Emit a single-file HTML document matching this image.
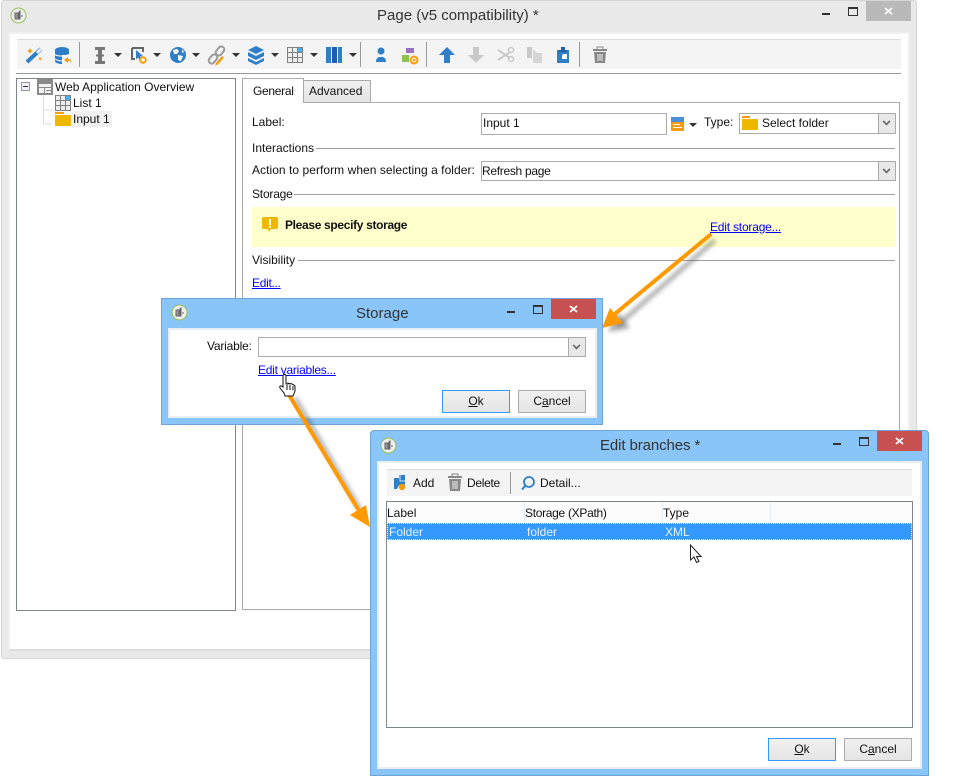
<!DOCTYPE html>
<html><head><meta charset="utf-8"><style>
html,body{margin:0;padding:0;background:#fff;width:953px;height:776px;overflow:hidden}
body{position:relative;font:12px/14px "Liberation Sans",sans-serif;color:#111}
.a{position:absolute;white-space:nowrap}
a,.lnk{color:#00f;text-decoration:underline}
.sel{background:#fff;border:1px solid #ababab;box-sizing:border-box;position:absolute}
.dd{position:absolute;right:0;top:0;bottom:0;width:16px;background:#e8e8e8;border-left:1px solid #ababab}
.dd:after{content:"";position:absolute;left:4px;top:4px;width:5px;height:5px;border-right:2px solid #666;border-bottom:2px solid #666;transform:rotate(45deg) scale(.8)}
.btn{position:absolute;box-sizing:border-box;background:linear-gradient(#f0f0f0,#e5e5e5);border:1px solid #acacac;text-align:center;line-height:20px;height:23px}
.btn.d{border-color:#3399ff}
.rule{position:absolute;height:1px;background:#a0a0a0}
.ti{position:absolute;font-size:15px;line-height:18px;color:#333;white-space:nowrap}
.dn{position:absolute;width:0;height:0;border-left:4px solid transparent;border-right:4px solid transparent;border-top:4px solid #333}
.sep{position:absolute;width:1px;background:#999}
</style></head><body>

<!-- main window -->
<div class="a" style="left:1px;top:0;width:916px;height:659px;background:#e9e9e9;border:1px solid #d6d6d6;box-sizing:border-box;border-radius:3px"></div>
<div class="a" style="left:8px;top:32px;width:902px;height:619px;background:#fff;border:2px solid #f0f0f0;border-bottom-color:#ddd;box-sizing:border-box"></div>
<svg class="a" style="left:10px;top:7px" width="17" height="17" viewBox="0 0 17 17"><circle cx="8.500" cy="8.500" r="7.500" fill="#eee" stroke="#8fc04f"/><path d="M5 6h3v6H5zM9 5l1-1v8H9zM11 9h2" stroke="#666" fill="#999"/></svg>
<div class="ti" style="left:377px;top:7px;">Page (v5 compatibility) *</div>
<div class="a" style="left:822px;top:13px;width:8px;height:2px;background:#333"></div>
<div class="a" style="left:848px;top:7px;width:8px;height:6px;border:1px solid #333;border-top-width:2px"></div>
<div class="a" style="left:866px;top:1px;width:45px;height:20px;background:#b9b9b9"></div>
<svg class="a" style="left:884px;top:7px" width="10" height="9"><path d="M1 1l7 6M8 1L1 7" stroke="#fff" stroke-width="1.800"/></svg>

<!-- toolbar -->
<div class="a" style="left:17px;top:39px;width:884px;height:30px;background:#f4f4f4;border-top:1px solid #ddd;box-sizing:border-box"></div>
<div class="a" style="left:16px;top:73px;width:885px;height:1px;background:#999"></div>
<div class="sep" style="left:79px;top:42px;height:25px"></div>
<div class="sep" style="left:360px;top:42px;height:25px"></div>
<div class="sep" style="left:426px;top:42px;height:25px"></div>
<div class="sep" style="left:579px;top:42px;height:25px"></div>

<svg class="a" style="left:0;top:39px" width="640" height="32" viewBox="0 39 640 32">
 <path d="M27 62L41 49" stroke="#2f7fc8" stroke-width="4"/><path d="M37 53l4-4" stroke="#eee" stroke-width="3"/><path d="M30 48l1 2 2 1-2 1-1 2-1-2-2-1 2-1zM40 57l1 1 1 1-1 .5-1 1-.5-1-1-1 1-.5z" fill="#f39c12"/>
 <ellipse cx="62" cy="50" rx="7" ry="3" fill="#2f7fc8"/><path d="M55 50v11c0 2 4 3 7 3V50zM62 50h7v5h-7z" fill="#2f7fc8"/><path d="M55 54.500c2 2 10 2 14 0M55 59c2 1.500 5 2 8 2" stroke="#fff" fill="none"/><path d="M64 60l4-3v2c3 0 3 2 3 4-1-2-2-2-3-2v2z" fill="#f39c12"/>
 <path d="M95 48.500h10M95 62.500h10" stroke="#777" stroke-width="3"/><path d="M100 48v14" stroke="#777" stroke-width="4"/><path d="M96 55.500h8" stroke="#777" stroke-width="2"/>
 <path d="M132 48h11v4M132 48v11h3" stroke="#666" stroke-width="2" fill="none"/><path d="M136 50l7 6-3 .5 2 3-2 1-2-3-2 2z" fill="#2f7fc8"/><circle cx="143" cy="60" r="2.800" fill="#fff" stroke="#f39c12" stroke-width="2"/>
 <circle cx="178" cy="55" r="8" fill="#2f7fc8"/><path d="M173 50l4-1 2 2-2 3-3 0zM178 55l5 1-2 5-3-1zM182 49l2 3-2 1z" fill="#fff"/>
 <g fill="none" stroke="#999" stroke-width="2"><rect x="-5" y="-3" width="10" height="6" rx="3" transform="translate(213 59) rotate(-50)"/><rect x="-5" y="-3" width="10" height="6" rx="3" transform="translate(220 51) rotate(-50)"/></g><path d="M216 63l6-7 2 1.500-6 7-3 1z" fill="#f39c12"/>
 <path d="M256 46l8 4-8 4-8-4z" fill="#2f7fc8"/><path d="M248 52v4l8 4 8-4v-4l-8 4zM248 58v3l8 4 8-4v-3l-8 4z" fill="#2f7fc8"/>
 <rect x="287" y="47" width="16" height="16" fill="#808080"/><path d="M288 48h4v4h-4zM293 48h4v4h-4zM288 53h4v4h-4zM293 53h4v4h-4zM298 53h4v4h-4zM288 58h4v4h-4zM293 58h4v4h-4zM298 58h4v4h-4z" fill="#eee"/><rect x="298" y="48" width="4" height="4" fill="#47b0e8"/>
 <path d="M326 47h5v16h-5zM338 47h4v16h-4z" fill="#2f7fc8"/><path d="M332 47h5v16h-5z" fill="#1f5fa8"/>
 <circle cx="381" cy="51" r="3.500" fill="#2f7fc8"/><path d="M376 62c0-3 1-4 3-5h4c2 1 3 2 3 5z" fill="#2f7fc8"/>
 <path d="M402 55h7v7h-7z" fill="#8cc04f"/><path d="M406 48h8v5h-8z" fill="#9b6fc8"/><circle cx="414" cy="60" r="3.500" fill="#fff" stroke="#f39c12" stroke-width="2"/><path d="M412 60h4M414 58v4" stroke="#f39c12"/>
 <path d="M447 47l8 8h-5v8h-6v-8h-5z" fill="#2f7fc8"/>
 <path d="M476 63l8-8h-5v-8h-6v8h-5z" fill="#c9c9c9"/>
 <path d="M498 50l12 8M498 60l12-8" stroke="#c9c9c9" stroke-width="2"/><circle cx="511" cy="50" r="2.500" fill="none" stroke="#c9c9c9" stroke-width="1.500"/><circle cx="511" cy="59" r="2.500" fill="none" stroke="#c9c9c9" stroke-width="1.500"/>
 <path d="M527 47h5v11h-5z" fill="#c9c9c9"/><path d="M533 49l4 4h5v10h-9z" fill="#d5d5d5"/>
 <path d="M557 50h12v13h-12z" fill="#2f7fc8"/><path d="M561 47h4v3h2v2h-8v-2h2z" fill="#1f5fa8"/><path d="M563 54h4v5h-5v-3z" fill="#fff"/>
 <path d="M593 50h14" stroke="#888" stroke-width="2"/><path d="M597 49v-2h6v2" stroke="#888" fill="none"/><path d="M594 52h12l-1 11h-10z" fill="#888"/><path d="M598 54v7M600 54v7M602 54v7" stroke="#eee"/>
</svg>
<div class="dn" style="left:114px;top:53px"></div>
<div class="dn" style="left:153px;top:53px"></div>
<div class="dn" style="left:192px;top:53px"></div>
<div class="dn" style="left:232px;top:53px"></div>
<div class="dn" style="left:271px;top:53px"></div>
<div class="dn" style="left:310px;top:53px"></div>
<div class="dn" style="left:349px;top:53px"></div>

<!-- tree -->
<div class="a" style="left:16px;top:78px;width:220px;height:533px;border:1px solid #80848c;box-sizing:border-box;background:#fff"></div>
<div class="a" style="left:21px;top:82px;width:9px;height:9px;border:1px solid #999;box-sizing:border-box;background:#eef"></div>
<div class="a" style="left:23px;top:86px;width:5px;height:1px;background:#333"></div>
<svg class="a" style="left:37px;top:79px" width="36" height="48"><path d="M6.500 16v29h8M6.500 31h10" stroke="#ddd" fill="none"/><rect x="0" y="0" width="16" height="16" fill="#8a8a8a"/><rect x="2" y="5" width="12" height="9" fill="#f2f2f2"/><path d="M7.500 9v5M2 8.500h12M9 11.500h5" stroke="#8a8a8a" stroke-width="1"/></svg>
<div class="a" style="left:55px;top:80px">Web Application Overview</div>
<svg class="a" style="left:55px;top:95px" width="16" height="16"><rect width="16" height="16" fill="#808080"/><path d="M1 1h4v4H1zM6 1h4v4H6zM1 6h4v4H1zM6 6h4v4H6zM11 6h4v4h-4zM1 11h4v4H1zM6 11h4v4H6zM11 11h4v4h-4z" fill="#eee"/><rect x="11" y="1" width="4" height="4" fill="#47b0e8"/></svg>
<div class="a" style="left:73px;top:96px">List 1</div>
<div class="a" style="left:71px;top:111px;width:41px;height:16px;background:#f0f0f0"></div>
<svg class="a" style="left:55px;top:112px" width="16" height="14"><rect width="9" height="2" fill="#f39c12"/><rect y="3" width="16" height="11" fill="#efb800"/></svg>
<div class="a" style="left:73px;top:112px">Input 1</div>

<!-- tabs -->
<div class="a" style="left:242px;top:102px;width:658px;height:508px;border:1px solid #aaa;box-sizing:border-box;background:#fff"></div>
<div class="a" style="left:303px;top:80px;width:68px;height:23px;border:1px solid #aaa;background:linear-gradient(#f0f0f0,#e4e4e4);box-sizing:border-box"></div>
<div class="a" style="left:242px;top:78px;width:62px;height:25px;border:1px solid #aaa;border-bottom:0;background:#fff;box-sizing:border-box"></div>
<div class="a" style="left:253px;top:84px;letter-spacing:-.3px">General</div>
<div class="a" style="left:309px;top:84px">Advanced</div>

<div class="a" style="left:252px;top:115px">Label:</div>
<div class="sel" style="left:481px;top:113px;width:186px;height:22px;padding:2px 1px">Input 1</div>
<svg class="a" style="left:671px;top:117px" width="13" height="14"><rect width="13" height="5" fill="#4a90d9"/><rect y="5" width="13" height="9" fill="#f39c12"/><path d="M2 7.500h7M2 10.500h9" stroke="#fff"/></svg>
<div class="dn" style="left:689px;top:123px"></div>
<div class="a" style="left:704px;top:115px">Type:</div>
<div class="sel" style="left:739px;top:113px;width:157px;height:21px"><div class="dd"></div></div>
<svg class="a" style="left:742px;top:116px" width="16" height="15"><rect width="8" height="2" fill="#f39c12"/><rect y="3" width="16" height="11" fill="#efb800"/></svg>
<div class="a" style="left:762px;top:116px">Select folder</div>

<div class="a" style="left:252px;top:141px">Interactions</div>
<div class="rule" style="left:316px;top:148px;width:579px"></div>
<div class="a" style="left:252px;top:163px;letter-spacing:.05px">Action to perform when selecting a folder:</div>
<div class="sel" style="left:481px;top:161px;width:415px;height:20px"><div class="dd"></div></div>
<div class="a" style="left:482px;top:164px;letter-spacing:-.3px">Refresh page</div>
<div class="a" style="left:252px;top:187px;letter-spacing:-.2px">Storage</div>
<div class="rule" style="left:294px;top:194px;width:601px"></div>
<div class="a" style="left:252px;top:207px;width:644px;height:40px;background:#ffffcb"></div>
<svg class="a" style="left:262px;top:217px" width="16" height="16"><path d="M2 0h12a2 2 0 0 1 2 2v8a2 2 0 0 1-2 2H9l-2 3-1-3H2a2 2 0 0 1-2-2V2a2 2 0 0 1 2-2z" fill="#efb800"/><path d="M8 2v6" stroke="#fff" stroke-width="2"/><rect x="7" y="9" width="2" height="2" fill="#fff"/></svg>
<div class="a" style="left:285px;top:218px;font-weight:bold;letter-spacing:-.33px">Please specify storage</div>
<div class="a lnk" style="left:710px;top:220px;letter-spacing:-.2px">Edit storage...</div>
<div class="a" style="left:252px;top:253px">Visibility</div>
<div class="rule" style="left:298px;top:260px;width:597px"></div>
<div class="a lnk" style="left:252px;top:276px;letter-spacing:-.3px">Edit...</div>

<!-- arrows below dialogs -->
<svg class="a" style="left:0;top:0" width="953" height="776">
 <defs><filter id="s" x="-30%" y="-30%" width="160%" height="160%"><feGaussianBlur stdDeviation="2.500"/></filter></defs>
 <g id="ar1"><path d="M715 240L618 325" stroke="#555" stroke-width="4" opacity=".55" filter="url(#s)"/><path d="M608 332l10-20 12 16z" fill="#555" opacity=".5" filter="url(#s)"/>
 <path d="M710 235L616 313" stroke="#f90" stroke-width="4" stroke-linecap="round"/><path d="M602 328l8-20 13 15z" fill="#f90"/></g>
</svg>

<!-- storage dialog -->
<div class="a" style="left:161px;top:298px;width:442px;height:127px;background:#8ac5f9;border:1px solid #6fa5d5;box-sizing:border-box"></div>
<div class="a" style="left:168px;top:328px;width:429px;height:90px;background:#fff;border:2px solid #e8eef4;box-sizing:border-box;outline:0"></div>
<svg class="a" style="left:171px;top:304px" width="17" height="17"><circle cx="8.500" cy="8.500" r="7.500" fill="#eee" stroke="#8fc04f"/><path d="M5 6h3v6H5zM9 5l1-1v8H9zM11 9h2" stroke="#666" fill="#999"/></svg>
<div class="ti" style="left:356px;top:305px">Storage</div>
<div class="a" style="left:507px;top:311px;width:8px;height:2px;background:#333"></div>
<div class="a" style="left:533px;top:305px;width:8px;height:6px;border:1px solid #333;border-top-width:2px"></div>
<div class="a" style="left:551px;top:299px;width:45px;height:20px;background:#c75050"></div>
<svg class="a" style="left:569px;top:305px" width="10" height="9"><path d="M1 1l7 6M8 1L1 7" stroke="#fff" stroke-width="1.800"/></svg>
<div class="a" style="left:207px;top:339px;letter-spacing:-.2px">Variable:</div>
<div class="sel" style="left:258px;top:337px;width:328px;height:20px"><div class="dd"></div></div>
<div class="a lnk" style="left:258px;top:363px;letter-spacing:-.25px">Edit variables...</div>
<div class="btn d" style="left:442px;top:390px;width:68px;"><u>O</u>k</div>
<div class="btn" style="left:518px;top:390px;width:68px;">C<u>a</u>ncel</div>

<!-- arrow 2 -->
<svg class="a" style="left:0;top:0" width="953" height="776">
 <path d="M295 398L360 510" stroke="#555" stroke-width="4" opacity=".55" filter="url(#s)"/>
 <path d="M289 395L358 509" stroke="#f90" stroke-width="4" stroke-linecap="round"/><path d="M370 527l-20-12 16-10z" fill="#f90"/>
</svg>
<!-- cursor hand -->
<svg class="a" style="left:279px;top:374px" width="18" height="24"><path d="M4 2c0-2 3-2 3 0v8l2 0 0-1 2 1 1-.5 2 1 1 .5 1 1v5l-2 5H6l-1-3-4-5c-1-2 1-3 3-1z" fill="#fff" stroke="#111"/><path d="M8 11v5M11 11v5M14 12v4" stroke="#111"/></svg>

<!-- edit branches dialog -->
<div class="a" style="left:370px;top:430px;width:559px;height:346px;background:#8ac5f9;border:1px solid #6fa5d5;border-radius:4px 4px 0 0;box-sizing:border-box"></div>
<div class="a" style="left:377px;top:461px;width:545px;height:308px;background:#fff;border:2px solid #eaeef2;box-sizing:border-box"></div>
<svg class="a" style="left:380px;top:437px" width="17" height="17"><circle cx="8.500" cy="8.500" r="7.500" fill="#eee" stroke="#8fc04f"/><path d="M5 6h3v6H5zM9 5l1-1v8H9zM11 9h2" stroke="#666" fill="#999"/></svg>
<div class="ti" style="left:600px;top:437px;letter-spacing:-.1px">Edit branches *</div>
<div class="a" style="left:833px;top:443px;width:8px;height:2px;background:#333"></div>
<div class="a" style="left:859px;top:437px;width:8px;height:6px;border:1px solid #333;border-top-width:2px"></div>
<div class="a" style="left:877px;top:431px;width:45px;height:20px;background:#c75050"></div>
<svg class="a" style="left:895px;top:437px" width="10" height="9"><path d="M1 1l7 6M8 1L1 7" stroke="#fff" stroke-width="1.800"/></svg>

<div class="a" style="left:387px;top:469px;width:525px;height:27px;background:#f4f4f4;border-top:1px solid #ddd;box-sizing:border-box"></div>
<svg class="a" style="left:390px;top:473px" width="200" height="20"><path d="M4 5h5V2h6v10H9l-2 4H4z" fill="#2f7fc8"/><path d="M10 2v6h5" stroke="#fff" fill="none" stroke-width=".8"/><circle cx="12" cy="14" r="3.200" fill="#f39c12"/>
 <path d="M58 4h14" stroke="#888" stroke-width="2"/><path d="M62 3v-2h6v2" stroke="#888" fill="none"/><path d="M59 6h12l-1 12h-10z" fill="#888"/><path d="M63 8v8M65 8v8M67 8v8" stroke="#eee"/>
 <circle cx="139" cy="9" r="5" fill="none" stroke="#2f7fc8" stroke-width="1.800"/><path d="M135.500 12.500l-3.500 4" stroke="#2f7fc8" stroke-width="2"/></svg>
<div class="a" style="left:413px;top:476px">Add</div>
<div class="a" style="left:467px;top:476px;letter-spacing:-.3px">Delete</div>
<div class="sep" style="left:510px;top:472px;height:22px"></div>
<div class="a" style="left:540px;top:476px">Detail...</div>

<div class="a" style="left:386px;top:501px;width:527px;height:227px;border:1px solid #80848c;box-sizing:border-box;background:#fff"></div>
<div class="a" style="left:387px;top:502px;width:525px;height:21px;background:#fcfcfc"></div>
<div class="a" style="left:524px;top:502px;width:1px;height:21px;background:#e3ecf5"></div>
<div class="a" style="left:662px;top:502px;width:1px;height:21px;background:#e3ecf5"></div>
<div class="a" style="left:770px;top:502px;width:1px;height:21px;background:#e3ecf5"></div>
<div class="a" style="left:387px;top:506px">Label</div>
<div class="a" style="left:525px;top:506px;letter-spacing:-.3px">Storage (XPath)</div>
<div class="a" style="left:663px;top:506px">Type</div>
<div class="a" style="left:387px;top:523px;width:525px;height:17px;background:#3399ff;border:1px dotted #fff;box-sizing:border-box"></div>
<div class="a" style="left:389px;top:525px;color:#e8f3ff">Folder</div>
<div class="a" style="left:527px;top:525px;color:#e8f3ff">folder</div>
<div class="a" style="left:665px;top:525px;color:#e8f3ff">XML</div>
<svg class="a" style="left:689px;top:544px" width="14" height="20"><path d="M1.500 1v15l3.500-3 2.500 5.500 2.500-1-2.500-5h4.500z" fill="#fff" stroke="#222"/></svg>
<div class="btn d" style="left:768px;top:738px;width:68px;"><u>O</u>k</div>
<div class="btn" style="left:844px;top:738px;width:68px;">C<u>a</u>ncel</div>

</body></html>
